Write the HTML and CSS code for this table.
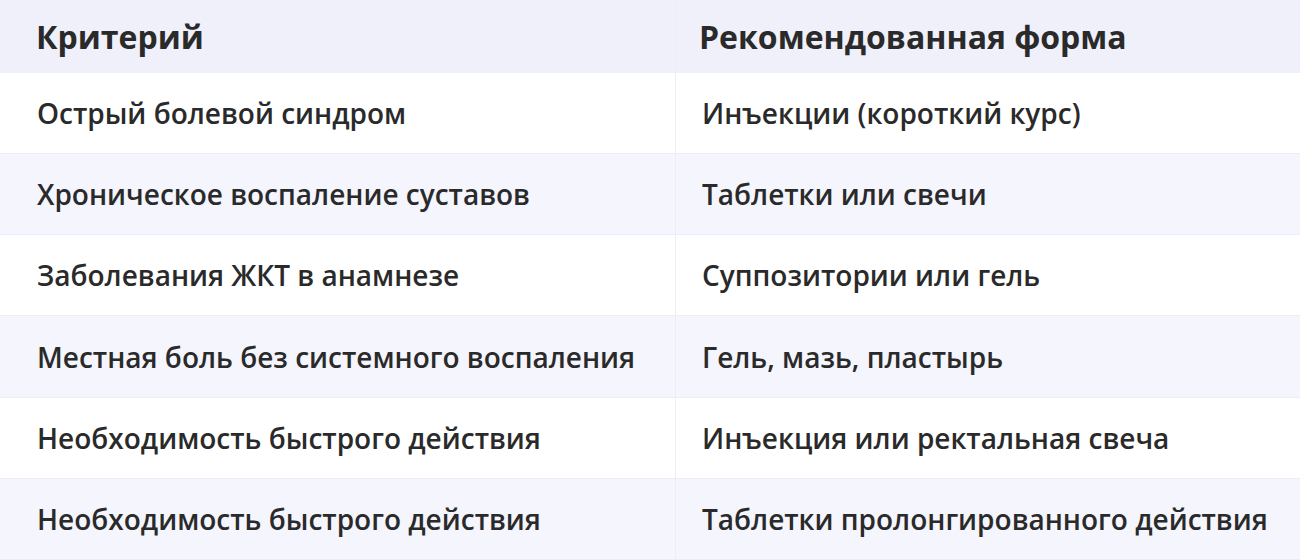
FILE: index.html
```html
<!DOCTYPE html>
<html lang="ru">
<head>
<meta charset="utf-8">
<link rel="stylesheet" href="styles.css">
</head>
<body>
<div class="table">
  <div class="cell head">Критерий</div>
  <div class="cell head right">Рекомендованная форма</div>

  <div class="cell">Острый болевой синдром</div>
  <div class="cell right">Инъекции (короткий курс)</div>

  <div class="cell alt">Хроническое воспаление суставов</div>
  <div class="cell alt right">Таблетки или свечи</div>

  <div class="cell">Заболевания ЖКТ в анамнезе</div>
  <div class="cell right">Суппозитории или гель</div>

  <div class="cell alt">Местная боль без системного воспаления</div>
  <div class="cell alt right">Гель, мазь, пластырь</div>

  <div class="cell">Необходимость быстрого действия</div>
  <div class="cell right">Инъекция или ректальная свеча</div>

  <div class="cell alt">Необходимость быстрого действия</div>
  <div class="cell alt right">Таблетки пролонгированного действия</div>
</div>
</body>
</html>
```

FILE: styles.css
```css
html, body {
  margin: 0;
  padding: 0;
  background: #ffffff;
}
body {
  font-family: "Open Sans", "Noto Sans", sans-serif;
  color: #2a2a2a;
}
.table {
  display: grid;
  grid-template-columns: 675px 1fr;
  grid-template-rows: 73px repeat(6, 1fr);
  width: 1300px;
  height: 560px;
}
.cell {
  display: flex;
  align-items: center;
  padding: 0 0 0 37px;
  font-size: 28px;
  font-weight: 600;
  border-bottom: 1px solid #ededf6;
  box-sizing: border-box;
  background: #ffffff;
  white-space: nowrap;
}
.cell.right {
  padding-left: 26px;
  border-left: 1px solid #ededf6;
}
.cell.alt {
  background: #f5f5fd;
}
.cell.head {
  background: #f0f0fb;
  font-size: 32px;
  font-weight: 700;
  padding-left: 36px;
  border-bottom: none;
}
.cell.head.right {
  padding-left: 23px;
}
```
